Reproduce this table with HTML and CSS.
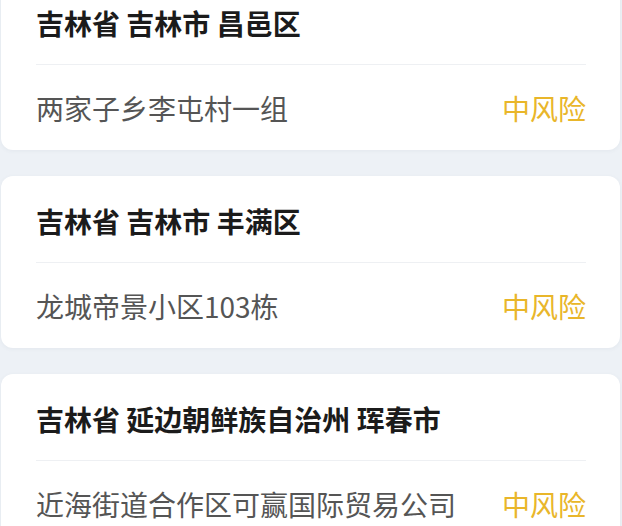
FILE: index.html
```html
<!DOCTYPE html>
<html lang="zh-CN">
<head>
  <meta charset="UTF-8" />
  <meta name="viewport" content="width=device-width, initial-scale=1.0"/>
  <title>风险地区</title>
  <link rel="stylesheet" href="styles.css">
</head>
<body>

  <!-- 风险地区列表 -->
  <div class="area-list">

    <div class="area-card">
      <div class="area-title">吉林省 吉林市 昌邑区</div>
      <div class="area-row">
        <span class="area-name">两家子乡李屯村一组</span>
        <span class="area-level">中风险</span>
      </div>
    </div>

    <div class="area-card">
      <div class="area-title">吉林省 吉林市 丰满区</div>
      <div class="area-row">
        <span class="area-name">龙城帝景小区103栋</span>
        <span class="area-level">中风险</span>
      </div>
    </div>

    <div class="area-card">
      <div class="area-title">吉林省 延边朝鲜族自治州 珲春市</div>
      <div class="area-row">
        <span class="area-name">近海街道合作区可赢国际贸易公司</span>
        <span class="area-level">中风险</span>
      </div>
    </div>

  </div>

</body>
</html>
```

FILE: styles.css
```css
body {
  margin: 0;
  padding: 0;
  background: #edf1f6;
  font-family: "Noto Sans CJK SC", "Noto Sans", sans-serif;
  overflow: hidden;
}

.area-list {
  margin-top: -22px; /* la primera tarjeta empieza cortada arriba */
  padding: 0 2px 0 1px;
  display: flex;
  flex-direction: column;
  gap: 26px;
}

.area-card {
  background: #ffffff;
  border-radius: 12px;
  padding: 0 34px 0 35px;
  box-shadow: 0 1px 4px rgba(60, 80, 110, 0.06);
}

.area-title {
  font-size: 28px;
  font-weight: 700;
  color: #1b1b1b;
  line-height: 40px;
  padding: 25px 0 21px;
  border-bottom: 1px solid #eef0f3;
}

.area-row {
  display: flex;
  justify-content: space-between;
  align-items: center;
  padding: 23px 0 22px;
  line-height: 40px;
}

.area-name {
  font-size: 28px;
  color: #555555;
}

.area-level {
  font-size: 28px;
  color: #e9b62a;
}
```
